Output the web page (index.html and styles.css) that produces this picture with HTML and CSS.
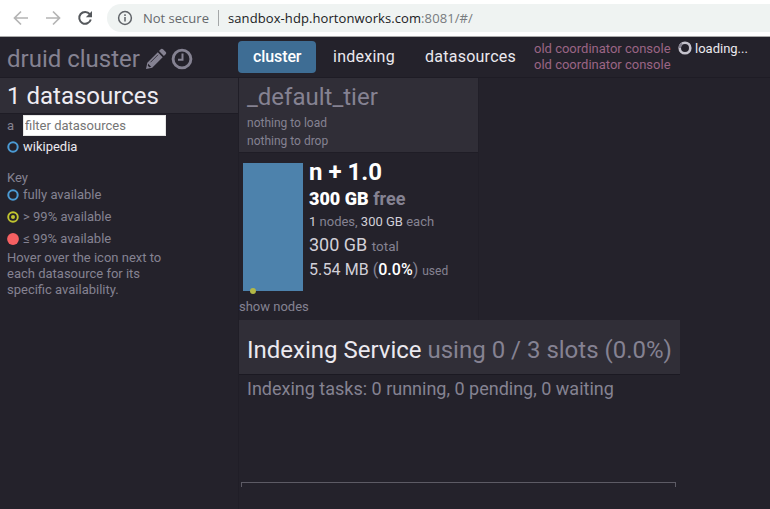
FILE: index.html
```html
<!DOCTYPE html>
<html lang="en">
<head>
<meta charset="utf-8">
<title>druid cluster</title>
<link rel="stylesheet" href="styles.css">
</head>
<body>
<div class="toolbar">
  <svg class="nav-icons" width="107" height="36" viewBox="0 0 107 36" fill="none" stroke="#b4b4b4" stroke-width="1.7">
    <path d="M28 18H15M21 11.5L14.5 18L21 24.500"/>
    <path d="M46 18H59M53 11.500L59.500 18L53 24.500"/>
    <path d="M89.800 14.200A5.900 5.900 0 1 0 90.800 19.500" stroke="#55585c" stroke-width="2"/>
    <path d="M92 11V17.200H85.800Z" fill="#55585c" stroke="none"/>
  </svg>
  <div class="address">
    <svg width="16" height="16" viewBox="0 0 16 16" fill="none" stroke="#5f6368" stroke-width="1.500"><circle cx="8" cy="8" r="6.400"/><path d="M8 7V11.500M8 4.300V5.900"/></svg>
    <span class="secure">Not secure</span>
    <span class="divider"></span>
    <span class="url">sandbox-hdp.hortonworks.com<span class="port">:8081/#/</span></span>
  </div>
</div>
<header class="header">
  <div class="brand">
    <span>druid cluster</span>
    <svg class="pencil" width="22" height="22" viewBox="0 0 22 22" fill="#858292"><path d="M1 21L2.300 14.800L12.800 4.300L17.700 9.200L7.200 19.700ZM14 3.100L16 1.100Q17 .3 18 1.200L20.800 4Q21.700 5 20.900 6L18.900 8Z"/><path d="M3.200 15.800L6.200 18.800L4.300 19.200L2.800 17.700Z" fill="#24222b"/><path d="M5.500 14.300L13 6.800" stroke="#24222b" stroke-width=".8"/></svg>
    <svg width="22" height="22" viewBox="0 0 22 22" fill="none" stroke="#858292"><circle cx="11" cy="11" r="8.900" stroke-width="2.900"/><path d="M11.500 5.500V11.700H7" stroke-width="2"/></svg>
  </div>
  <nav class="tabs">
    <a class="tab active">cluster</a>
    <a class="tab indexing">indexing</a>
    <a class="tab">datasources</a>
  </nav>
  <div class="consoles"><div>old coordinator console</div><div>old coordinator console</div></div>
  <div class="loading"><svg width="14" height="14" viewBox="0 0 14 14" fill="none" stroke-width="2.600"><circle cx="7" cy="7" r="5.300" stroke="#c4c2cc"/><path d="M4 2.650A5.300 5.300 0 0 0 1.700 7" stroke="#85828f"/></svg><span>loading...</span></div>
</header>
<main class="main">
  <aside class="sidebar">
    <h2 class="side-title">1 datasources</h2>
    <div class="filter"><span>a</span><input type="text" placeholder="filter datasources"></div>
    <div class="source"><svg width="12" height="12" viewBox="0 0 12 12"><circle cx="6" cy="6" r="4.700" fill="none" stroke="#4b9bd5" stroke-width="2"/></svg><span>wikipedia</span></div>
    <div class="key">
      <div class="key-title">Key</div>
      <div class="key-row first"><svg width="12" height="12" viewBox="0 0 12 12"><circle cx="6" cy="6" r="4.700" fill="none" stroke="#4b9bd5" stroke-width="2"/></svg><span>fully available</span></div>
      <div class="key-row"><svg width="12" height="12" viewBox="0 0 12 12"><circle cx="6" cy="6" r="4.800" fill="none" stroke="#c1c52f" stroke-width="1.900"/><circle cx="6" cy="6" r="2" fill="#c1c52f"/></svg><span>&gt; 99% available</span></div>
      <div class="key-row"><svg width="12" height="12" viewBox="0 0 12 12"><circle cx="6" cy="6" r="5.900" fill="#f66062"/></svg><span>≤ 99% available</span></div>
      <p class="hint">Hover over the icon next to<br>each datasource for its<br>specific availability.</p>
    </div>
  </aside>
  <div class="content">
    <section class="tier">
      <div class="tier-head">
        <h2>_default_tier</h2>
        <div>nothing to load</div>
        <div>nothing to drop</div>
      </div>
      <div class="tier-body">
        <div class="bar"><i class="dot"></i></div>
        <div class="stats">
          <div class="redundancy">n + 1.0</div>
          <div class="free"><b>300 GB</b> free</div>
          <div class="nodes"><em>1</em> nodes, <em>300 GB</em> each</div>
          <div class="total"><em>300 GB</em> <span>total</span></div>
          <div class="used"><em>5.54 MB</em> (<strong>0.0%</strong>) <span>used</span></div>
        </div>
      </div>
      <div class="show">show nodes</div>
    </section>
    <section class="service">
      <h2><b>Indexing Service</b> using 0 / 3 slots (0.0%)</h2>
      <p>Indexing tasks: 0 running, 0 pending, 0 waiting</p>
      <div class="axis"></div>
    </section>
  </div>
</main>
</body>
</html>
```
FILE: styles.css
```css
* { box-sizing: border-box; }
body { margin: 0; height: 509px; overflow: hidden; background: #24222b; color: #858292; font: 13px/16px Roboto, sans-serif; }
h2, p { margin: 0; font-weight: 400; }
svg { display: block; flex: none; }
em { font-style: normal; color: #d2d0d8; }

.toolbar { display: flex; height: 37px; background: #fff; border-bottom: 1px solid #aaa; }
.address { display: flex; align-items: center; flex: 1; height: 28px; margin-top: 4px; padding-left: 10px; background: #eff3f2; border-radius: 14px 0 0 14px; font: 13px/18px "Open Sans", sans-serif; white-space: nowrap; }
.secure { width: 67px; margin-left: 10px; color: #65686c; }
.divider { width: 1px; height: 16px; margin: 0 9px 0 8px; background: #a4a7a8; }
.url { color: #202124; letter-spacing: .09px; }
.port { color: #777b7e; }

.header { display: flex; height: 41px; border-bottom: 1px solid #1e1c25; white-space: nowrap; }
.brand { display: flex; align-items: center; width: 238px; padding: 3px 0 0 7px; font-size: 24px; line-height: 38px; }
.brand span { width: 133px; }
.pencil { margin: 0 4px 0 5px; }
.tabs { display: flex; width: 296px; height: 32px; margin-top: 4px; font-size: 16px; line-height: 31px; color: #ebe9ef; letter-spacing: .25px; }
.tab { padding: 0 15px; }
.indexing { width: 92px; padding: 0 0 0 17px; margin-right: 2px; }
.active { width: 78px; background: #3e6d94; border-radius: 4px; color: #fff; font-weight: 500; letter-spacing: -.1px; }
.consoles { width: 144px; padding-top: 4px; color: #9b6585; }
.loading { display: flex; gap: 3px; padding-top: 4px; color: #ebe9ef; }

.main { display: flex; }
.sidebar { width: 239px; height: 431px; border-right: 1px solid #201e27; }
.side-title { height: 36px; padding-left: 7px; background: #302e37; border-bottom: 1px solid #1e1c25; color: #eeecf2; font-size: 24px; line-height: 37px; }
.filter { display: flex; align-items: center; height: 22px; padding: 1px 0 0 7px; }
.filter span { width: 16px; }
.filter input { width: 143px; height: 21px; padding: 0 1px; border: 1px solid #e5e5e5; background: #fff; font: 13px Roboto, sans-serif; }
.filter input::placeholder { color: #757575; }
.source, .key-row { display: flex; align-items: center; gap: 4px; height: 22px; padding-left: 7px; }
.source { color: #ebe9ef; }
.key { padding-top: 11px; }
.key-title { padding-left: 7px; height: 17px; line-height: 18px; }
.key-row.first { height: 20px; padding-bottom: 2px; }
.hint { padding-left: 7px; }

.content { width: 531px; }
.tier { width: 240px; height: 242px; border-right: 1px solid #211f28; }
.tier-head { height: 75px; padding: 2px 8px; background: #302e37; border-bottom: 1px solid #1f1d26; font-size: 12px; line-height: 18px; }
.tier-head h2 { height: 34px; font-size: 24px; line-height: 34px; }
.tier-body { display: flex; gap: 6px; height: 138px; padding: 10px 0 0 4px; white-space: nowrap; }
.bar { position: relative; width: 60px; height: 128px; background: #4d82ac; }
.dot { position: absolute; left: 7px; bottom: -3px; width: 6px; height: 6px; border-radius: 50%; background: #b3b846; }
.redundancy { margin-top: -5px; height: 28px; color: #fff; font-size: 24px; line-height: 28px; font-weight: 700; }
.free { height: 25px; font-size: 18px; line-height: 25px; font-weight: 700; }
.free b { color: #fff; }
.nodes { height: 21px; line-height: 21px; }
.total { height: 25px; font-size: 18px; line-height: 25px; }
.total span { font-size: 13.500px; }
.used { height: 26px; font-size: 16px; line-height: 26px; }
.used em { letter-spacing: .1px; }
.used strong { color: #fff; font-weight: 500; }
.used span { font-size: 12px; }
.show { padding-top: 8px; }
.service { width: 441px; }
.service h2 { height: 55px; padding: 2px 8px 0; background: #302e37; border-bottom: 1px solid #1b1922; font-size: 24px; line-height: 56px; white-space: nowrap; }
.service b { color: #ebe9ef; font-weight: 400; }
.service p { padding: 2px 8px; font-size: 18px; line-height: 24px; }
.axis { width: 435px; height: 5px; margin: 79px 0 0 2px; border: 1px solid #5d5b65; border-bottom: 0; }
```
